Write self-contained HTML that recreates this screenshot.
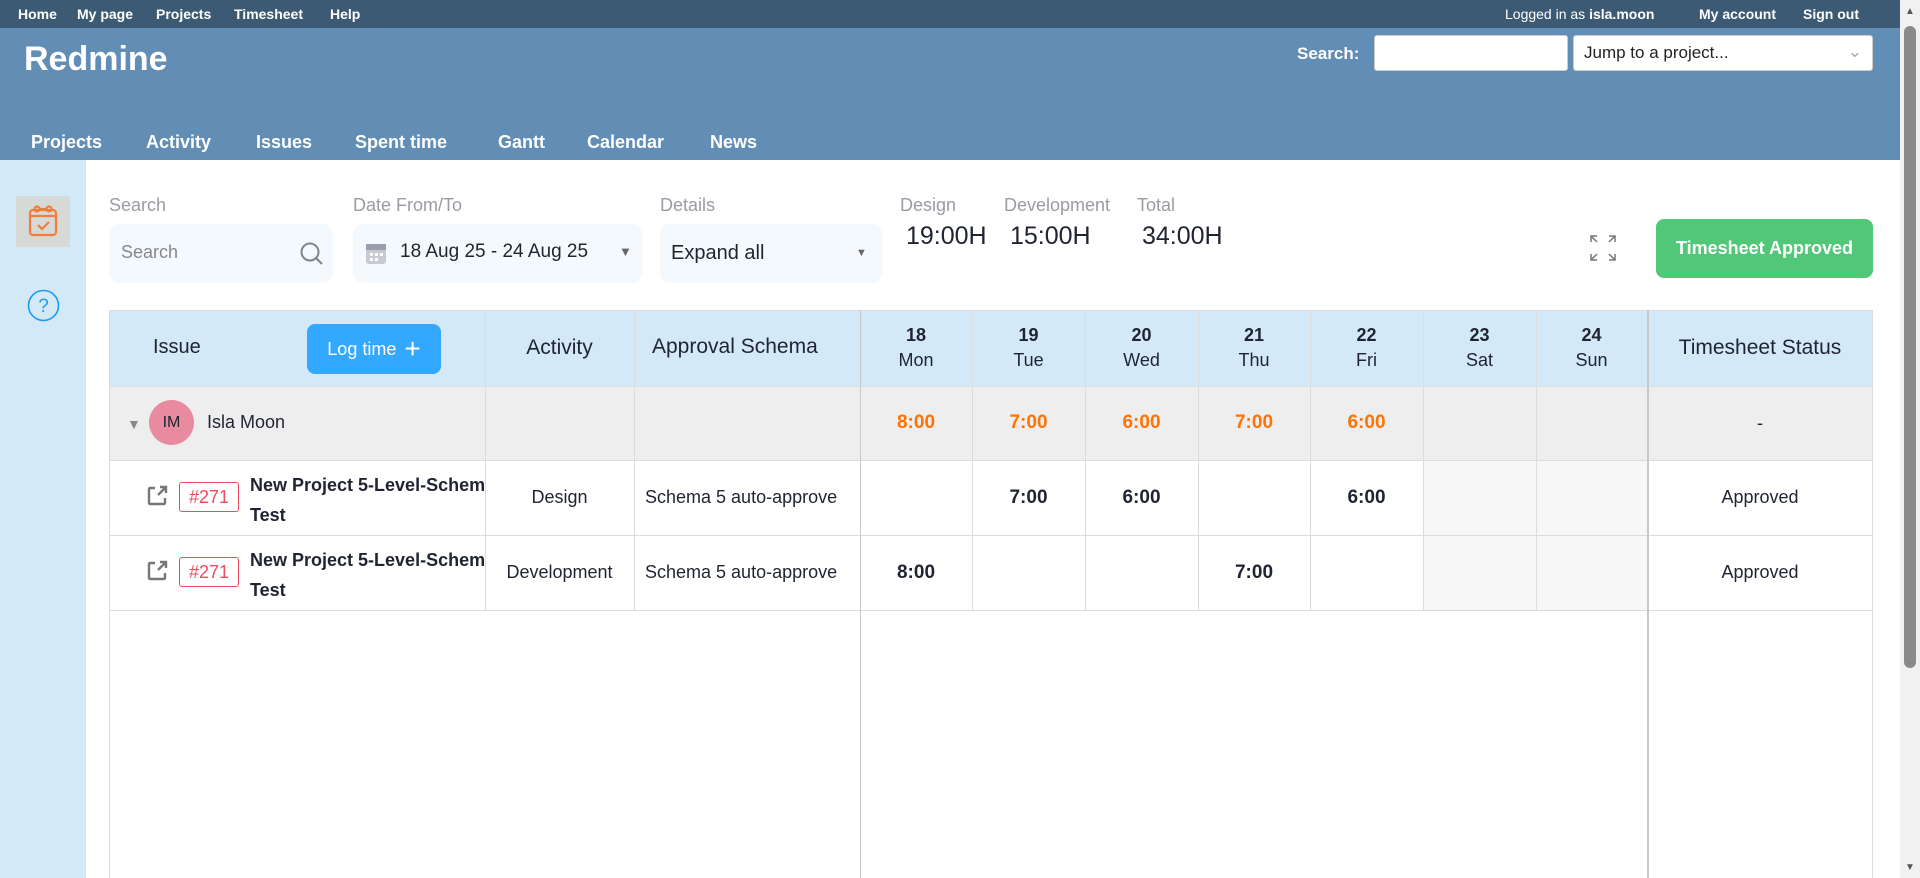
<!DOCTYPE html>
<html><head><meta charset="utf-8"><style>
*{box-sizing:border-box;margin:0;padding:0}
body{width:1920px;height:878px;overflow:hidden;background:#fff;font-family:"Liberation Sans",sans-serif;position:relative;color:#1f2430}
.a{position:absolute}
#top{left:0;top:0;width:1900px;height:28px;background:#3d5a75;color:#fff;font-weight:bold;font-size:14px}
#top span{position:absolute;top:6px}
#hdr{left:0;top:28px;width:1900px;height:132px;background:#628db5;color:#fff}
#hdr h1{position:absolute;left:24px;top:12px;font-size:34px;font-weight:bold}
.mm{position:absolute;top:104px;font-size:18px;font-weight:bold}
#side{left:0;top:160px;width:86px;height:718px;background:#d3e9f8}
#scroll{left:1900px;top:0;width:20px;height:878px;background:#f1f1f1}
.lbl{font-size:18px;color:#9a9ca3;top:195px}
.box{background:#f4f9fe;border-radius:10px;top:224px;height:59px}
.val{font-size:25px;top:222px;color:#1f2430}
.cell{position:absolute;display:flex;align-items:center;justify-content:center;text-align:center}
.vl{position:absolute;width:1px;background:#dcdcdc}
.hl{position:absolute;height:1px;background:#dcdcdc}
.or{color:#ff7300;font-weight:bold;font-size:19px}
.bk{font-weight:bold;font-size:19px}
.day{font-size:18px;line-height:25px}
.day b{font-weight:600}
</style></head><body>
<div id="top" class="a">
<span style="left:18px">Home</span><span style="left:77px">My page</span><span style="left:156px">Projects</span><span style="left:234px">Timesheet</span><span style="left:330px">Help</span>
<span style="left:1505px;font-weight:normal">Logged in as <b>isla.moon</b></span><span style="left:1699px">My account</span><span style="left:1803px">Sign out</span>
</div>
<div id="hdr" class="a">
<h1>Redmine</h1>
<span style="position:absolute;left:1297px;top:16px;font-size:17px;font-weight:bold">Search:</span>
<div style="position:absolute;left:1374px;top:7px;width:194px;height:36px;background:#fff;border-radius:3px;border:1px solid #ccc"></div>
<div style="position:absolute;left:1573px;top:7px;width:300px;height:36px;background:#fff;border-radius:3px;border:1px solid #ccc;color:#222;font-size:17px;padding:7px 10px">Jump to a project...<span style="position:absolute;right:10px;top:6px;color:#aaa">&#8964;</span></div>
<span class="mm" style="left:31px">Projects</span><span class="mm" style="left:146px">Activity</span><span class="mm" style="left:256px">Issues</span><span class="mm" style="left:355px">Spent time</span><span class="mm" style="left:498px">Gantt</span><span class="mm" style="left:587px">Calendar</span><span class="mm" style="left:710px">News</span>
</div>
<div id="side" class="a">
<div class="a" style="left:16px;top:36px;width:54px;height:51px;background:#d6d9d6"></div>
<svg class="a" style="left:27px;top:44px" width="32" height="34" viewBox="0 0 32 34" fill="none" stroke="#f47c3c" stroke-width="2.2"><rect x="3" y="6" width="26" height="25" rx="3"/><line x1="3" y1="12" x2="29" y2="12"/><circle cx="10" cy="5" r="2.5"/><circle cx="22" cy="5" r="2.5"/><line x1="12" y1="5" x2="20" y2="5"/><path d="M11 21l4 4 7-7"/></svg>
<svg class="a" style="left:27px;top:129px" width="33" height="33" viewBox="0 0 33 33"><circle cx="16.5" cy="16.5" r="15" fill="none" stroke="#1c9bf0" stroke-width="1.6"/><text x="16.5" y="23" font-size="19" text-anchor="middle" fill="#1c9bf0" font-family="Liberation Sans">?</text></svg>
</div>
<div id="scroll" class="a"><div class="a" style="left:4px;top:26px;width:12px;height:642px;background:#8a8a8a;border-radius:6px"></div><div class="a" style="left:5px;top:6px;color:#555;font-size:10px">&#9650;</div><div class="a" style="left:5px;top:862px;color:#555;font-size:10px">&#9660;</div></div>

<span class="a lbl" style="left:109px">Search</span>
<span class="a lbl" style="left:353px">Date From/To</span>
<span class="a lbl" style="left:660px">Details</span>
<span class="a lbl" style="left:900px">Design</span>
<span class="a lbl" style="left:1004px">Development</span>
<span class="a lbl" style="left:1137px">Total</span>
<div class="a box" style="left:109px;width:224px"><span class="a" style="left:12px;top:18px;font-size:18px;color:#888">Search</span>
<svg class="a" style="left:190px;top:17px" width="26" height="26" viewBox="0 0 26 26" fill="none" stroke="#80838c" stroke-width="2"><circle cx="11" cy="11" r="8.5"/><line x1="17" y1="17" x2="23" y2="23"/></svg></div>
<div class="a box" style="left:353px;width:289px"><svg class="a" style="left:12px;top:17px" width="22" height="24" viewBox="0 0 22 24"><rect x="1" y="3" width="20" height="20" rx="3" fill="#c8cad3"/><rect x="1" y="3" width="20" height="6" fill="#9a9eab"/><g fill="#fff"><rect x="5" y="12" width="3" height="3"/><rect x="10" y="12" width="3" height="3"/><rect x="15" y="12" width="3" height="3"/><rect x="5" y="17" width="3" height="3"/><rect x="10" y="17" width="3" height="3"/></g></svg><span class="a" style="left:47px;top:17px;font-size:19px">18 Aug 25 - 24 Aug 25</span><span class="a" style="left:266px;top:20px;color:#666;font-size:13px">&#9660;</span></div>
<div class="a box" style="left:660px;width:222px"><span class="a" style="left:11px;top:18px;font-size:20px">Expand all</span><span class="a" style="left:196px;top:23px;color:#666;font-size:11px">&#9660;</span></div>
<span class="a val" style="left:906px">19:00H</span>
<span class="a val" style="left:1010px">15:00H</span>
<span class="a val" style="left:1142px">34:00H</span>
<svg class="a" style="left:1589px;top:234px" width="28" height="28" viewBox="0 0 28 28" fill="none" stroke="#777" stroke-width="1.5"><path d="M2 8V2h6M2 2l6 6M26 8V2h-6M26 2l-6 6M2 20v6h6M2 26l6-6M26 20v6h-6M26 26l-6-6"/></svg>
<div class="a" style="left:1656px;top:219px;width:217px;height:59px;background:#50c878;border-radius:8px;color:#fff;font-size:18px;font-weight:bold;display:flex;align-items:center;justify-content:center">Timesheet Approved</div>

<div class="a" style="left:109px;top:310px;width:1764px;height:568px;border:1px solid #dcdcdc;border-bottom:none"></div>
<div class="a" style="left:110px;top:311px;width:1762px;height:75px;background:#d3e9f8"></div>
<div class="a" style="left:110px;top:386px;width:1762px;height:74px;background:#eeeeee"></div>
<div class="a" style="left:1423px;top:460px;width:224px;height:150px;background:#f7f7f7"></div>
<div class="hl" style="left:110px;top:386px;width:1762px"></div>
<div class="hl" style="left:110px;top:460px;width:1762px"></div>
<div class="hl" style="left:110px;top:535px;width:1762px"></div>
<div class="hl" style="left:110px;top:610px;width:1762px"></div>
<div class="vl" style="left:485px;top:310px;height:300px"></div>
<div class="vl" style="left:634px;top:310px;height:300px"></div>
<div class="vl" style="left:860px;top:310px;height:568px;background:#c8c8c8"></div>
<div class="vl" style="left:972px;top:310px;height:300px"></div>
<div class="vl" style="left:1085px;top:310px;height:300px"></div>
<div class="vl" style="left:1198px;top:310px;height:300px"></div>
<div class="vl" style="left:1310px;top:310px;height:300px"></div>
<div class="vl" style="left:1423px;top:310px;height:300px"></div>
<div class="vl" style="left:1536px;top:310px;height:300px"></div>
<div class="vl" style="left:1647px;top:310px;height:568px;width:2px;background:#c8c8c8"></div>

<span class="a" style="left:153px;top:336px;font-size:20px">Issue</span>
<div class="a" style="left:307px;top:324px;width:134px;height:50px;background:#33a8ff;border-radius:8px;color:#fff;font-size:18px;display:flex;align-items:center;justify-content:center">Log time <span style="font-size:28px;margin-left:8px;font-weight:300">+</span></div>
<div class="cell" style="left:485px;top:310px;width:149px;height:76px;font-size:21px">Activity</div>
<span class="a" style="left:652px;top:335px;font-size:21px">Approval Schema</span>
<div class="cell day" style="left:860px;top:318px;width:112px;height:60px"><div><b>18</b><br>Mon</div></div>
<div class="cell day" style="left:972px;top:318px;width:113px;height:60px"><div><b>19</b><br>Tue</div></div>
<div class="cell day" style="left:1085px;top:318px;width:113px;height:60px"><div><b>20</b><br>Wed</div></div>
<div class="cell day" style="left:1198px;top:318px;width:112px;height:60px"><div><b>21</b><br>Thu</div></div>
<div class="cell day" style="left:1310px;top:318px;width:113px;height:60px"><div><b>22</b><br>Fri</div></div>
<div class="cell day" style="left:1423px;top:318px;width:113px;height:60px"><div><b>23</b><br>Sat</div></div>
<div class="cell day" style="left:1536px;top:318px;width:111px;height:60px"><div><b>24</b><br>Sun</div></div>
<div class="cell" style="left:1648px;top:310px;width:224px;height:76px;font-size:21px">Timesheet Status</div>

<span class="a" style="left:127px;top:416px;color:#888;font-size:14px">&#9660;</span>
<div class="a" style="left:149px;top:400px;width:45px;height:45px;border-radius:50%;background:#e88aa0;font-size:16px;display:flex;align-items:center;justify-content:center">IM</div>
<span class="a" style="left:207px;top:412px;font-size:18px">Isla Moon</span>
<div class="cell or" style="left:860px;top:386px;width:112px;height:74px">8:00</div>
<div class="cell or" style="left:972px;top:386px;width:113px;height:74px">7:00</div>
<div class="cell or" style="left:1085px;top:386px;width:113px;height:74px">6:00</div>
<div class="cell or" style="left:1198px;top:386px;width:112px;height:74px">7:00</div>
<div class="cell or" style="left:1310px;top:386px;width:113px;height:74px">6:00</div>
<div class="cell" style="left:1648px;top:386px;width:224px;height:74px;font-size:18px">-</div>

<svg class="a" style="left:146px;top:485px" width="22" height="22" viewBox="0 0 22 22" fill="none" stroke="#777" stroke-width="2.4"><path d="M9 3H4a1 1 0 0 0-1 1v14a1 1 0 0 0 1 1h14a1 1 0 0 0 1-1v-5M12 10l8-8M14 2h6v6"/></svg>
<div class="a" style="left:179px;top:482px;width:60px;height:30px;border:1px solid #f04a5f;border-radius:3px;color:#f04a5f;font-size:18px;display:flex;align-items:center;justify-content:center">#271</div>
<div class="a" style="left:250px;top:470px;width:235px;overflow:hidden;white-space:nowrap;font-size:18px;font-weight:bold;line-height:30px">New Project 5-Level-Schema<br>Test</div>
<div class="cell" style="left:485px;top:460px;width:149px;height:75px;font-size:18px">Design</div>
<div class="a" style="left:645px;top:487px;width:215px;overflow:hidden;white-space:nowrap;font-size:18px">Schema 5 auto-approve</div>
<div class="cell bk" style="left:972px;top:460px;width:113px;height:75px">7:00</div>
<div class="cell bk" style="left:1085px;top:460px;width:113px;height:75px">6:00</div>
<div class="cell bk" style="left:1310px;top:460px;width:113px;height:75px">6:00</div>
<div class="cell" style="left:1648px;top:460px;width:224px;height:75px;font-size:18px">Approved</div>

<svg class="a" style="left:146px;top:560px" width="22" height="22" viewBox="0 0 22 22" fill="none" stroke="#777" stroke-width="2.4"><path d="M9 3H4a1 1 0 0 0-1 1v14a1 1 0 0 0 1 1h14a1 1 0 0 0 1-1v-5M12 10l8-8M14 2h6v6"/></svg>
<div class="a" style="left:179px;top:557px;width:60px;height:30px;border:1px solid #f04a5f;border-radius:3px;color:#f04a5f;font-size:18px;display:flex;align-items:center;justify-content:center">#271</div>
<div class="a" style="left:250px;top:545px;width:235px;overflow:hidden;white-space:nowrap;font-size:18px;font-weight:bold;line-height:30px">New Project 5-Level-Schema<br>Test</div>
<div class="cell" style="left:485px;top:535px;width:149px;height:75px;font-size:18px">Development</div>
<div class="a" style="left:645px;top:562px;width:215px;overflow:hidden;white-space:nowrap;font-size:18px">Schema 5 auto-approve</div>
<div class="cell bk" style="left:860px;top:535px;width:112px;height:75px">8:00</div>
<div class="cell bk" style="left:1198px;top:535px;width:112px;height:75px">7:00</div>
<div class="cell" style="left:1648px;top:535px;width:224px;height:75px;font-size:18px">Approved</div>
</body></html>
